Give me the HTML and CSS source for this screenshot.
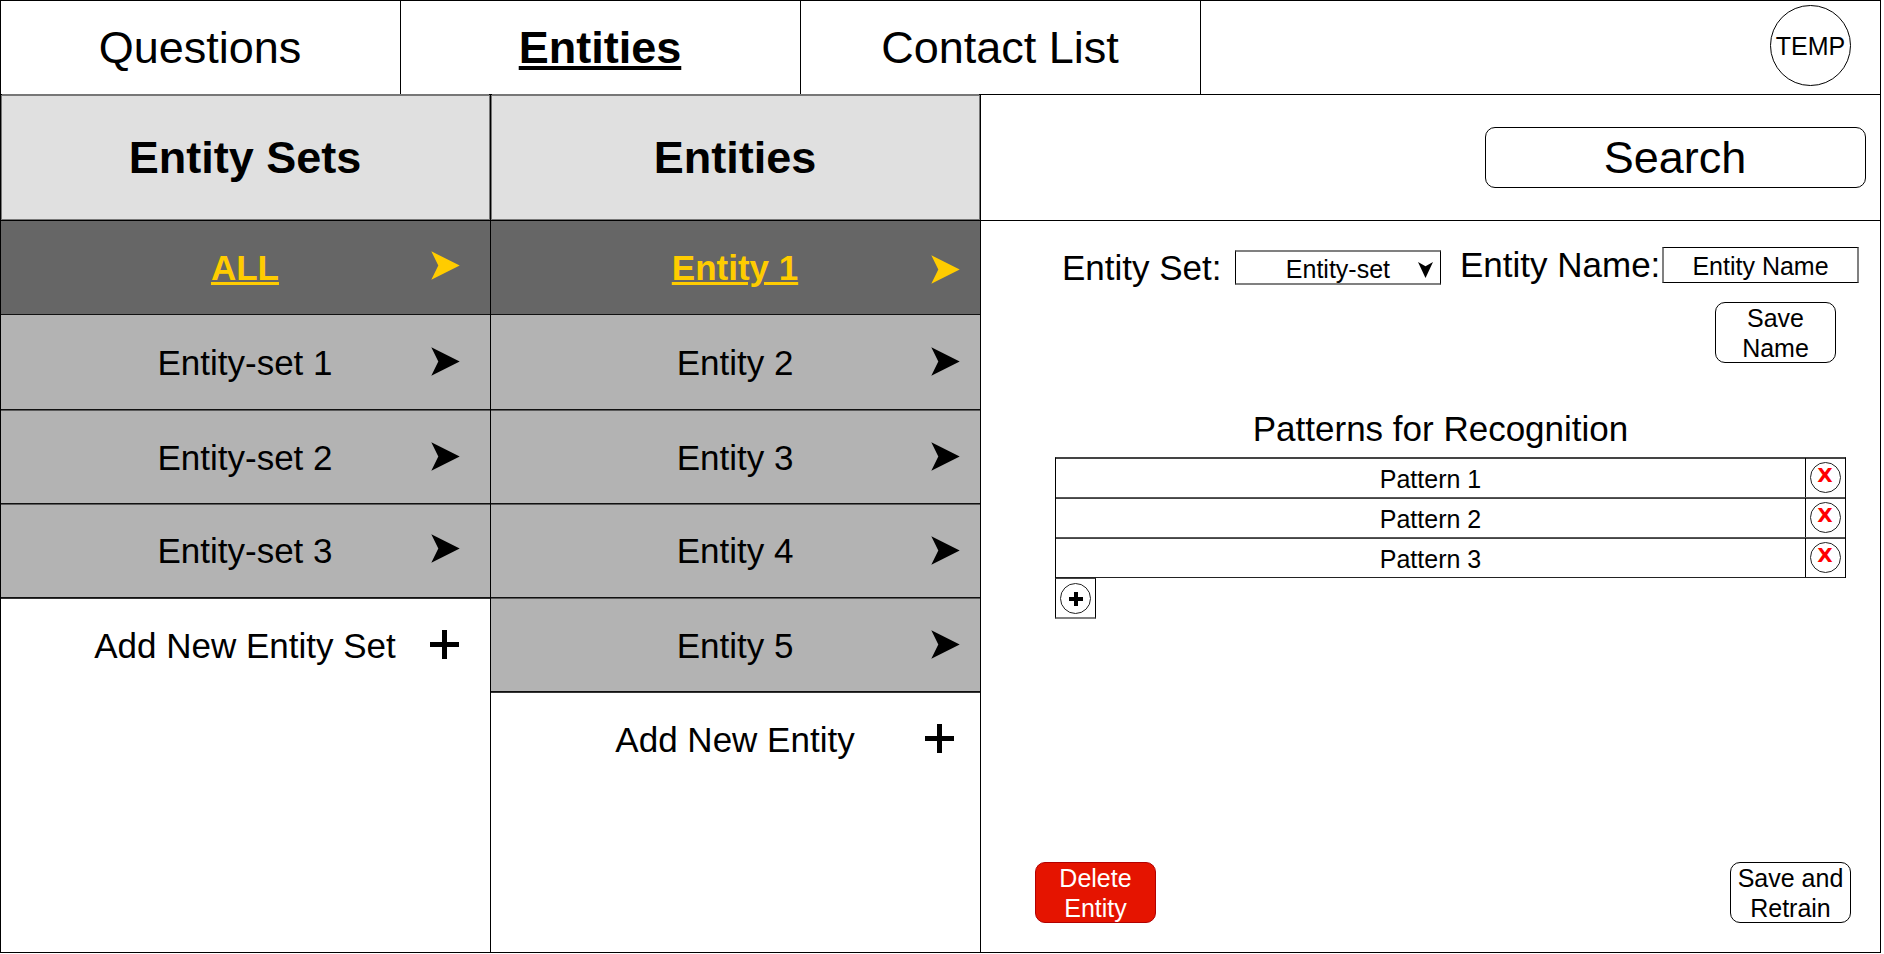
FILE: index.html
```html
<!DOCTYPE html>
<html lang="en">
<head>
<meta charset="utf-8">
<title>Entities</title>
<link rel="stylesheet" href="styles.css">
</head>
<body>
<svg class="defs" width="0" height="0" aria-hidden="true">
  <symbol id="arrow" viewBox="0 0 29 29"><path d="M0.3 0.3 28.7 14.5 0.3 28.7 7.3 14.5Z" fill="currentColor"/></symbol>
  <symbol id="plus" viewBox="0 0 29 29"><path d="M0 14.5H29M14.5 0V29" stroke="currentColor" stroke-width="5" fill="none"/></symbol>
</svg>
<div class="app">
  <nav class="nav">
    <a class="tab">Questions</a>
    <a class="tab active">Entities</a>
    <a class="tab">Contact List</a>
    <div class="account"><span class="avatar">TEMP</span></div>
  </nav>
  <main class="main">
    <section class="column">
      <h2 class="heading">Entity Sets</h2>
      <div class="row selected"><span class="label">ALL</span><svg class="icon up"><use href="#arrow"/></svg></div>
      <div class="row tall"><span class="label">Entity-set 1</span><svg class="icon"><use href="#arrow"/></svg></div>
      <div class="row"><span class="label low">Entity-set 2</span><svg class="icon level"><use href="#arrow"/></svg></div>
      <div class="row"><span class="label">Entity-set 3</span><svg class="icon high"><use href="#arrow"/></svg></div>
      <div class="row add"><span class="label">Add New Entity Set</span><svg class="icon plus-left"><use href="#plus"/></svg></div>
    </section>
    <section class="column">
      <h2 class="heading">Entities</h2>
      <div class="row selected"><span class="label">Entity 1</span><svg class="icon down"><use href="#arrow"/></svg></div>
      <div class="row tall"><span class="label">Entity 2</span><svg class="icon"><use href="#arrow"/></svg></div>
      <div class="row"><span class="label low">Entity 3</span><svg class="icon level"><use href="#arrow"/></svg></div>
      <div class="row"><span class="label">Entity 4</span><svg class="icon level"><use href="#arrow"/></svg></div>
      <div class="row"><span class="label low">Entity 5</span><svg class="icon level"><use href="#arrow"/></svg></div>
      <div class="row add"><span class="label">Add New Entity</span><svg class="icon plus-right"><use href="#plus"/></svg></div>
    </section>
    <section class="detail">
      <div class="searchbar"><div class="button search">Search</div></div>
      <div class="form">
        <span class="caption set-caption">Entity Set:</span>
        <div class="select">Entity-set<svg class="caret" viewBox="0 0 15 16"><path d="M0 0 7.5 4.3 15 0 7.5 16Z"/></svg></div>
        <span class="caption name-caption">Entity Name:</span>
        <div class="input">Entity Name</div>
      </div>
      <div class="button small save-name">Save<br>Name</div>
      <h3 class="title">Patterns for Recognition</h3>
      <div class="patterns">
        <div class="pattern"><span class="name">Pattern 1</span><span class="cell"><span class="round remove">X</span></span></div>
        <div class="pattern"><span class="name">Pattern 2</span><span class="cell"><span class="round remove">X</span></span></div>
        <div class="pattern"><span class="name">Pattern 3</span><span class="cell"><span class="round remove">X</span></span></div>
      </div>
      <div class="add-pattern"><span class="round"><svg class="tiny-plus" viewBox="0 0 14 14"><path d="M0 7H14M7 0V14" stroke="#000" stroke-width="4"/></svg></span></div>
      <div class="actions">
        <div class="button small delete">Delete<br>Entity</div>
        <div class="button small">Save and<br>Retrain</div>
      </div>
    </section>
  </main>
</div>
</body>
</html>
```
FILE: styles.css
```css
* { box-sizing: border-box; }
body {
  margin: 0;
  background: #fff;
  color: #000;
  font-family: "Liberation Sans", Arial, sans-serif;
  font-size: 25px;
  line-height: 30px;
}
.defs { display: block; }
.app {
  width: 1881px;
  height: 953px;
  border: 1px solid #000;
  display: flex;
  flex-direction: column;
}

/* Top navigation */
.nav {
  height: 94px;
  display: flex;
  flex: none;
  border-bottom: 1px solid #000;
}
.tab {
  width: 400px;
  border-right: 1px solid #000;
  display: flex;
  align-items: center;
  justify-content: center;
  padding-right: 1px;
  font-size: 45px;
  line-height: 54px;
}
.tab.active { font-weight: bold; text-decoration: underline; }
.account {
  flex: 1;
  display: flex;
  justify-content: flex-end;
  padding: 4px 29px 0 0;
}
.avatar {
  width: 81px;
  height: 81px;
  border: 1px solid #000;
  border-radius: 50%;
  display: flex;
  align-items: center;
  justify-content: center;
}

/* List columns */
.main { flex: 1; display: flex; }
.column { width: 490px; border-right: 1px solid #000; }
.heading {
  margin: 0;
  height: 126px;
  background: #e0e0e0;
  border-bottom: 1px solid #000;
  box-shadow: inset 0 0 0 1px #777, 0 -2px 0 -1px #777;
  display: flex;
  align-items: center;
  justify-content: center;
  padding-right: 1px;
  font-size: 45px;
  line-height: 54px;
}
.row {
  height: 94px;
  background: #b3b3b3;
  border-bottom: 1px solid #111;
  box-shadow: inset 0 1px #5a5a5a;
  display: grid;
  grid-template-columns: 1fr;
  align-items: center;
  font-size: 35px;
  line-height: 42px;
}
.row.tall { height: 95px; box-shadow: none; }
.row > * { grid-area: 1 / 1; }
.label { text-align: center; padding: 1px 1px 0 0; }
.label.low { padding-top: 3px; }
.icon { width: 29px; height: 29px; justify-self: end; margin: 0 30px 2px 0; }
.column + .column .icon { margin-right: 20px; }
.icon.level { margin-bottom: 0; }
.icon.up { margin-bottom: 5px; }
.icon.high { margin-bottom: 4px; }
.icon.down { margin: 3px 0 0; }
.icon.plus-left { margin-right: 31px; }
.column + .column .icon.plus-right { margin-right: 26px; }
.row.selected { background: #666; color: #fc0; box-shadow: none; }
.row.selected .label { font-weight: bold; text-decoration: underline; }
.row.add { background: #fff; border-bottom: 0; box-shadow: inset 0 1px #333; }

/* Entity detail */
.detail { flex: 1; display: flex; flex-direction: column; }
.searchbar {
  height: 126px;
  border-bottom: 1px solid #000;
  padding: 32px 14px 0 0;
  display: flex;
  justify-content: flex-end;
}
.button {
  border: 1px solid #000;
  border-radius: 10px;
  height: 61px;
  display: flex;
  align-items: center;
  justify-content: center;
  text-align: center;
}
.search { width: 381px; padding-right: 1px; font-size: 45px; line-height: 54px; }
.small { width: 121px; }
.form { display: flex; align-items: flex-start; padding: 23px 0 0 81px; }
.caption { font-size: 35px; line-height: 42px; white-space: nowrap; }
.set-caption { width: 173px; margin-top: 3px; }
.name-caption { width: 202px; margin-left: 19px; }
.select {
  width: 206px;
  height: 35px;
  margin-top: 6px;
  border: solid;
  border-width: 2px 1px;
  border-color: #808080 #000;
  display: flex;
  align-items: center;
  justify-content: flex-end;
  padding: 2px 7px 0 0;
}
.caret { width: 15px; height: 16px; margin: 3px 0 0 28px; }
.input {
  width: 197px;
  height: 36px;
  margin-top: 3px;
  border: solid;
  border-width: 1px 2px;
  border-color: #000 #808080;
  display: flex;
  align-items: center;
  justify-content: center;
  padding-top: 2px;
}
.save-name { margin: 13px 0 0 734px; }
.title {
  margin: 45px 0 0 74px;
  width: 771px;
  text-align: center;
  font-size: 35px;
  line-height: 42px;
  font-weight: normal;
}
.patterns {
  width: 791px;
  margin: 7px 0 0 74px;
  border: 1px solid #000;
  border-bottom: 0;
  border-top: 1px solid #444;
}
.pattern {
  height: 40px;
  display: flex;
  box-shadow: inset 0 1px #444;
  border-bottom: 1px solid #555;
}
.pattern:last-child { border-bottom-color: #222; }
.name { flex: 1; text-align: center; padding-top: 6px; }
.cell {
  width: 40px;
  border-left: 1px solid #000;
  display: flex;
  justify-content: center;
  padding-top: 4px;
}
.round {
  width: 31px;
  height: 31px;
  border: 1px solid #222;
  border-radius: 50%;
  display: flex;
  align-items: center;
  justify-content: center;
}
.remove {
  color: #f00;
  font: bold 20px/28px "DejaVu Sans", sans-serif;
  padding: 0 1px 5px 0;
}
.add-pattern {
  width: 41px;
  height: 41px;
  margin-left: 74px;
  border: 1px solid #000;
  border-top-color: #444;
  border-bottom: 2px solid #808080;
  display: flex;
  justify-content: center;
  padding-top: 4px;
}
.tiny-plus { width: 14px; height: 14px; }
.actions {
  margin-top: auto;
  display: flex;
  justify-content: space-between;
  padding: 0 29px 29px 54px;
}
.delete { background: #e51400; border-color: #b20000; color: #fff; }
```
